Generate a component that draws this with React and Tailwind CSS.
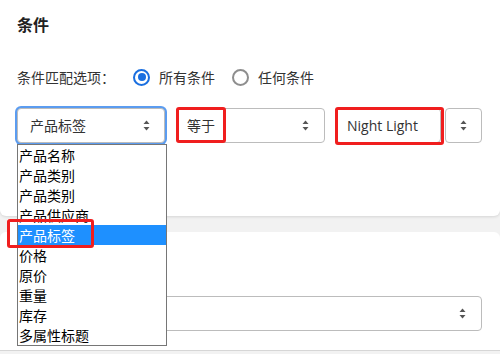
const cjk = { fontFamily: '"Noto Sans CJK SC", "Noto Sans", sans-serif' };

function Arrows() {
  return (
    <svg width="7" height="11" viewBox="0 0 7 11" className="shrink-0">
      <path d="M3.5 0.5 L6.5 4 H0.5 Z" fill="#555" />
      <path d="M3.5 10.5 L6.5 7 H0.5 Z" fill="#555" />
    </svg>
  );
}

function Select({ label, className = '', pad = 'pl-3', arrowPad = 'pr-[14px]' }) {
  return (
    <div
      className={`flex h-[35px] items-center justify-between rounded-[4px] border border-[#bcbcbc] bg-white ${pad} ${arrowPad} ${className}`}
    >
      <span className="text-[14px] text-[#333]" style={cjk}>{label}</span>
      <Arrows />
    </div>
  );
}

function Radio({ checked, label }) {
  return (
    <div className="flex items-center gap-[9px]">
      <span
        className={`flex h-[17px] w-[17px] items-center justify-center rounded-full border-2 ${
          checked ? 'border-[#1a6fe0]' : 'border-[#8e8e8e]'
        }`}
      >
        {checked && <span className="h-[8px] w-[8px] rounded-full bg-[#1a6fe0]" />}
      </span>
      <span className="text-[14px] text-[#333]" style={cjk}>{label}</span>
    </div>
  );
}

const options = ['产品名称', '产品类别', '产品类别', '产品供应商', '产品标签', '价格', '原价', '重量', '库存', '多属性标题'];

export default function App() {
  return (
    <div className="relative h-[354px] w-[500px] overflow-hidden bg-[#f2f2f2]" style={cjk}>
      <div className="h-[216px] rounded-b-md bg-white px-[17px] pt-[13px] shadow-[0_1px_3px_rgba(0,0,0,0.12)]">
        <h2 className="text-[16px] font-bold leading-[22px] text-[#222]">条件</h2>
        <div className="mt-[32px] flex h-[20px] items-center">
          <span className="w-[116px] text-[14px] text-[#333]">条件匹配选项：</span>
          <div className="flex items-center gap-[17px]">
            <Radio checked label="所有条件" />
            <Radio label="任何条件" />
          </div>
        </div>
        <div className="mt-[21px] flex items-start">
          <Select label="产品标签" className="w-[148px] ring-2 ring-[#5b9cf0]" arrowPad="pr-[14px]" />
          <Select label="等于" className="ml-[11px] w-[149px]" pad="pl-[10px]" arrowPad="pr-[15px]" />
          <div className="ml-[11px] flex h-[35px] w-[105px] items-center rounded-[4px] border border-[#bcbcbc] bg-white pl-[10px]">
            <span className="text-[14px] text-[#333]" style={{ fontFamily: '"Open Sans", sans-serif' }}>Night Light</span>
          </div>
          <div className="ml-[4px] flex h-[35px] w-[37px] items-center justify-center rounded-[4px] border border-[#bcbcbc] bg-white">
            <Arrows />
          </div>
        </div>
      </div>

      <div className="mt-[16px] h-[119px] rounded-t-md border-b border-[#d6d6d6] bg-white px-[17px] pt-[64px]">
        <Select label="" className="w-[465px]" arrowPad="pr-[15px]" />
      </div>

      {/* open dropdown list */}
      <div className="absolute left-[7px] top-[219px] z-10 h-[29px] w-[12px] bg-white" />
      <div className="absolute left-[17px] top-[144px] z-20 w-[150px] border border-[#767676] bg-white">
        {options.map((o, i) => (
          <div
            key={i}
            className={`h-[20px] pl-[1px] text-[14px] leading-[20px] ${
              i === 4 ? 'bg-[#1e90ff] text-white' : 'text-black'
            }`}
          >
            {o}
          </div>
        ))}
      </div>

      {/* red annotation boxes */}
      <div className="absolute left-[176px] top-[107px] z-30 h-[36px] w-[50px] rounded-[3px] border-[3px] border-[#f01e1e]" />
      <div className="absolute left-[335px] top-[107px] z-30 h-[38px] w-[109px] rounded-[3px] border-[3px] border-[#f01e1e]" />
      <div className="absolute left-[7px] top-[219px] z-30 h-[29px] w-[87px] rounded-[3px] border-[3px] border-[#f01e1e]" />
    </div>
  );
}
